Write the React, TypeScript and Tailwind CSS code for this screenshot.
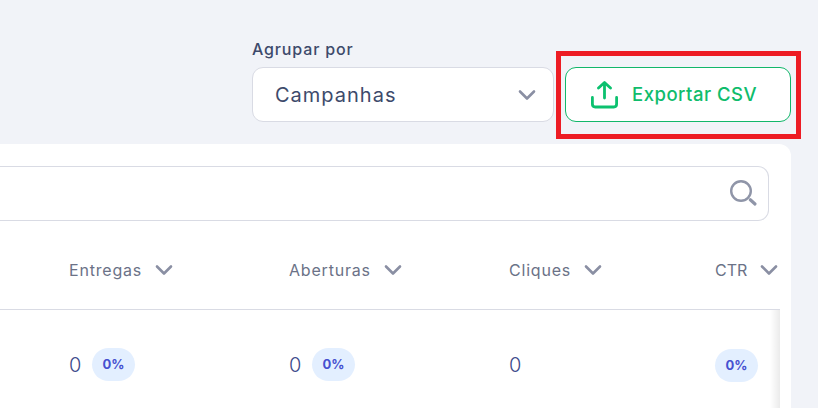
const Chevron = ({ className }: { className: string }) => (
  <svg viewBox="0 0 18 12" fill="none" className={className}>
    <path d="M2 2.5L9 9.5L16 2.5" stroke="#8a8fa3" strokeWidth="2.6" strokeLinecap="round" strokeLinejoin="round" />
  </svg>
);

const Badge = () => (
  <span className="flex h-[33px] w-[43px] items-center justify-center rounded-full bg-[#e3efff] text-[13px] font-bold text-[#4650d0]">
    0%
  </span>
);

const columns = [
  { label: "Entregas", badge: true },
  { label: "Aberturas", badge: true },
  { label: "Cliques", badge: false },
];

export default function App() {
  return (
    <div className="relative h-[408px] w-[818px] overflow-hidden bg-[#f1f3f8] font-['Inter',sans-serif]">
      {/* Top actions */}
      <div className="flex h-[144px] items-end justify-end gap-[11px] pr-[27px] pb-[22px]">
        <div className="flex flex-col">
          <label className="mb-[8px] text-[16px] leading-[20px] font-medium tracking-[0.85px] text-[#3d4a6b]">Agrupar por</label>
          <div className="flex h-[55px] w-[302px] items-center justify-between rounded-[11px] border border-[#d9dbe4] bg-white pr-[17px] pl-[22px]">
            <span className="text-[20px] tracking-[1px] text-[#3d4a6b]">Campanhas</span>
            <Chevron className="h-[12px] w-[18px]" />
          </div>
        </div>
        <button className="flex h-[55px] w-[226px] items-center gap-[13px] rounded-[11px] border border-[#12b76a] bg-white pl-[25px] text-[18.5px] font-medium tracking-[0.5px] text-[#0fbc6c]">
          <svg viewBox="0 0 28 28" fill="none" className="h-[28px] w-[28px]">
            <path d="M13.5 17V1.8M7.5 7L13.5 1.5L19.5 7" stroke="#0cc16f" strokeWidth="2.8" strokeLinecap="round" strokeLinejoin="round" />
            <path d="M1.4 16.5V23C1.4 24.8 2.5 26 4.2 26H22.8C24.5 26 25.6 24.8 25.6 23V16.5" stroke="#0cc16f" strokeWidth="2.8" strokeLinecap="round" strokeLinejoin="round" />
          </svg>
          Exportar CSV
        </button>
      </div>

      {/* Card with table */}
      <div className="mr-[27px] h-[264px] rounded-tr-[12px] bg-white pt-[22px]">
        <div className="mr-[22px] flex h-[55px] items-center justify-end rounded-r-[11px] border border-l-0 border-[#d9dbe4] pr-[10px]">
          <svg viewBox="0 0 30 30" fill="none" className="-mt-[1px] h-[30px] w-[30px]">
            <circle cx="13" cy="13" r="9.8" stroke="#8f95a8" strokeWidth="2.4" />
            <path d="M22.3 21.8L27 26" stroke="#8f95a8" strokeWidth="3.2" strokeLinecap="round" />
          </svg>
        </div>
        <div className="mr-[11px] flex h-[89px] items-center border-b border-[#d9dbe4] pt-[9px] pl-[69px]">
          {columns.map((c) => (
            <div key={c.label} className={`flex items-center gap-[13px] ${c.label === "Cliques" ? "w-[206px]" : "w-[220px]"}`}>
              <span className="text-[16px] tracking-[0.8px] text-[#6b7287]">{c.label}</span>
              <Chevron className="h-[12px] w-[18px]" />
            </div>
          ))}
          <div className="flex items-center gap-[13px]">
            <span className="text-[16px] text-[#6b7287]">CTR</span>
            <Chevron className="h-[12px] w-[18px]" />
          </div>
        </div>
        <div className="flex h-[110px] items-start pt-[38px] pl-[69px]">
          {columns.map((c) => (
            <div key={c.label} className={`flex h-[33px] items-center ${c.label === "Cliques" ? "w-[206px]" : "w-[220px]"}`}>
              <span className="w-[23px] text-[20px] font-light text-[#3d4a8b]">0</span>
              {c.badge && <Badge />}
            </div>
          ))}
          <div className="mt-[1px]">
            <Badge />
          </div>
        </div>
      </div>

      {/* Sticky column shadow */}
      <div className="absolute top-[310px] left-[770px] h-[98px] w-[10px] bg-gradient-to-r from-white to-[#ebebeb]" />
      {/* Annotation */}
      <div className="absolute top-[51px] left-[556px] h-[88px] w-[245px] border-[5px] border-[#ed1c24]" />
    </div>
  );
}
